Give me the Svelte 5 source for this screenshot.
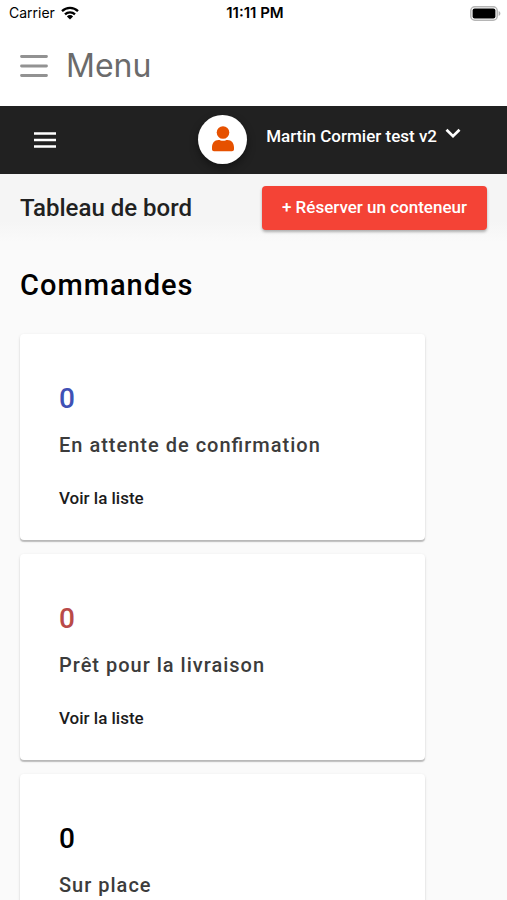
<script>
  const cards = [
    { count: 0, label: 'En attente de confirmation', tone: 'blue' },
    { count: 0, label: 'Prêt pour la livraison', tone: 'red' },
    { count: 0, label: 'Sur place', tone: 'black' }
  ];
</script>

<div class="screen">
  <div class="status">
    <div class="carrier">
      <span>Carrier</span>
      <svg width="18" height="14" viewBox="0 0 18 14" aria-hidden="true">
        <g fill="none" stroke="#000" stroke-width="2.3">
          <path d="M1 5.2a11.500 11.500 0 0 1 16 0" />
          <path d="M4 8.300a7.200 7.200 0 0 1 10 0" />
        </g>
        <path d="M9 13.600 5.900 10.400a4.400 4.400 0 0 1 6.200 0z" />
      </svg>
    </div>
    <time>11:11 PM</time>
    <svg class="battery" width="31" height="15" viewBox="0 0 31 15" aria-hidden="true">
      <rect x="0.800" y="0.800" width="26.400" height="13.400" rx="4" fill="#fff" stroke="#b5b5b5" stroke-width="1.500" />
      <rect x="2.600" y="2.600" width="22.800" height="9.800" rx="2" />
      <path d="M28.600 5v5c1.100-.4 1.800-1.400 1.800-2.500S29.700 5.400 28.600 5z" fill="#b0b0b0" />
    </svg>
  </div>

  <button class="menu">
    <svg width="28" height="24" viewBox="0 0 28 24" aria-hidden="true">
      <path d="M1.500 2.500h25M1.500 12h25M1.500 21.500h25" stroke="#929292" stroke-width="2.800" stroke-linecap="round" />
    </svg>
    <span>Menu</span>
  </button>

  <header>
    <button class="drawer" aria-label="Ouvrir la navigation">
      <svg width="22" height="16" viewBox="0 0 22 16" aria-hidden="true">
        <path d="M0 1.500h22M0 8h22M0 14.500h22" stroke="#fff" stroke-width="2.500" />
      </svg>
    </button>
    <button class="account">
      <span class="avatar">
        <svg width="22" height="26" viewBox="0 0 22 26" aria-hidden="true">
          <circle cx="11" cy="6.500" r="6.300" fill="#e65100" />
          <path d="M0 21.500C0 17 2.500 14 6.500 14c1.500 0 2.500.8 4.500.8s3-.8 4.500-.8c4 0 6.500 3 6.500 7.500v1.700c0 1.200-.9 2-2 2H2c-1.100 0-2-.8-2-2z" fill="#e65100" />
        </svg>
      </span>
      <span class="name">
        Martin Cormier test v2
        <svg width="16" height="11" viewBox="0 0 16 11" aria-hidden="true">
          <path d="m1.500 1.700 6.500 6.500 6.500-6.500" fill="none" stroke="#fff" stroke-width="2.700" />
        </svg>
      </span>
    </button>
  </header>

  <main>
    <div class="toolbar">
      <h1>Tableau de bord</h1>
      <button class="reserve">+ Réserver un conteneur</button>
    </div>
    <section>
      <h2>Commandes</h2>
      <div class="cards">
        {#each cards as card}
          <article>
            <p class="count {card.tone}">{card.count}</p>
            <h3>{card.label}</h3>
            <a href="#liste">Voir la liste</a>
          </article>
        {/each}
      </div>
    </section>
  </main>
</div>

<style>
  .screen {
    display: flex;
    flex-direction: column;
    height: 100vh;
    background: #fafafa;
    color: #212121;
    font-family: Roboto, 'Liberation Sans', sans-serif;
  }
  h1, h2, h3, p {
    margin: 0;
    font-weight: 500;
  }
  button {
    border: 0;
    padding: 0;
    background: none;
    font: inherit;
    color: inherit;
    cursor: pointer;
  }
  svg {
    display: block;
    flex: none;
  }
  .status {
    display: grid;
    grid-template-columns: 1fr auto 1fr;
    align-items: center;
    flex: none;
    height: 26px;
    padding: 0 6px 0 9px;
    background: #fff;
    color: #000;
    font: 400 14px/16px Inter, 'Liberation Sans', sans-serif;
  }
  .carrier {
    display: flex;
    align-items: center;
    gap: 6px;
  }
  time {
    font-size: 15px;
    font-weight: 600;
  }
  .battery {
    justify-self: end;
  }
  .menu {
    display: flex;
    align-items: center;
    gap: 18px;
    flex: none;
    height: 80px;
    padding: 0 20px;
    background: #fff;
    color: #6b6b6b;
    font: 400 32px/40px Inter, 'Liberation Sans', sans-serif;
  }
  header {
    display: flex;
    align-items: center;
    justify-content: space-between;
    flex: none;
    height: 68px;
    padding: 0 46px 0 34px;
    background: #212121;
    color: #fff;
  }
  .account {
    display: flex;
    align-items: center;
    gap: 19px;
    padding-bottom: 2px;
  }
  .avatar {
    display: grid;
    place-items: center;
    width: 49px;
    height: 49px;
    border-radius: 50%;
    background: #fff;
    box-shadow: 0 4px 8px rgba(0, 0, 0, 0.4);
  }
  .name {
    display: flex;
    align-items: center;
    gap: 8px;
    padding-bottom: 6px;
    font-size: 17px;
    font-weight: 500;
    line-height: 24px;
  }
  .name svg {
    margin-bottom: 6px;
  }
  main {
    flex: 1;
    min-height: 0;
    overflow-y: auto;
    scrollbar-width: none;
  }
  .toolbar {
    display: flex;
    align-items: center;
    justify-content: space-between;
    height: 68px;
    padding: 0 20px;
    background: linear-gradient(#f5f5f5 70%, #fafafa);
  }
  h1 {
    font-size: 24px;
    line-height: 32px;
  }
  .reserve {
    height: 44px;
    padding: 0 20px 2px;
    border-radius: 4px;
    background: #f44336;
    color: #fff;
    font-size: 17px;
    font-weight: 500;
    box-shadow: 0 2px 3px rgba(0, 0, 0, 0.3);
  }
  section {
    padding: 25px 82px 20px 20px;
  }
  h2 {
    color: #000;
    font-size: 29px;
    line-height: 36px;
    letter-spacing: 1px;
  }
  .cards {
    display: grid;
    gap: 14px;
    margin-top: 31px;
  }
  article {
    padding: 47px 39px 30px;
    border-radius: 4px;
    background: #fff;
    box-shadow: 0 2px 1px rgba(0, 0, 0, 0.2), 0 1px 3px rgba(0, 0, 0, 0.12);
  }
  .count {
    font-size: 28px;
    line-height: 36px;
  }
  .blue {
    color: #3f51b5;
  }
  .red {
    color: #b94a48;
  }
  .black {
    color: #000;
  }
  h3 {
    margin-top: 16px;
    color: #3c3c3c;
    font-size: 20px;
    line-height: 24px;
    letter-spacing: 1px;
    font-feature-settings: 'liga' 1;
  }
  a {
    display: inline-block;
    margin-top: 29px;
    color: #1c1c1c;
    font-size: 17px;
    font-weight: 500;
    line-height: 24px;
    text-decoration: none;
  }
</style>
